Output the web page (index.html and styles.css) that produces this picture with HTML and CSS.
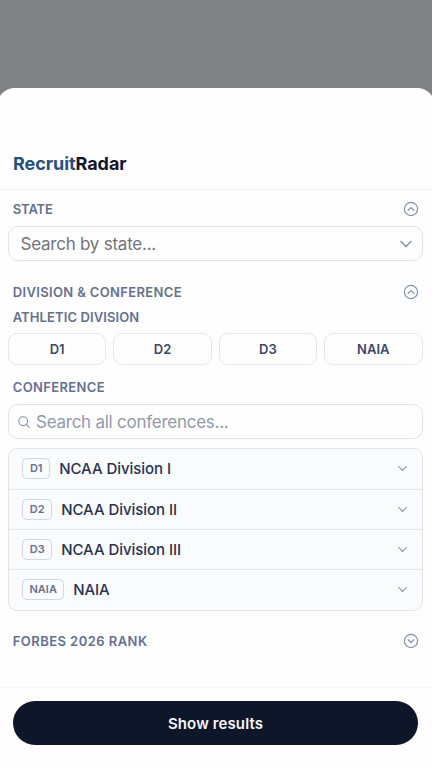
FILE: index.html
```
<!DOCTYPE html>
<html lang="en">
<head>
<meta charset="utf-8">
<title>RecruitRadar</title>
<link rel="stylesheet" href="styles.css">
</head>
<body>
<svg class="defs" aria-hidden="true">
  <symbol id="down" viewBox="0 0 12 12"><path d="M1 3.5 6 8.5 11 3.5"/></symbol>
  <symbol id="circle-up" viewBox="0 0 16 16"><circle cx="8" cy="8" r="6.6"/><path d="M5.1 9.3 8 6.6l2.9 2.7"/></symbol>
  <symbol id="circle-down" viewBox="0 0 16 16"><circle cx="8" cy="8" r="6.6"/><path d="M5.1 6.8 8 9.5l2.9-2.7"/></symbol>
  <symbol id="search" viewBox="0 0 12 12"><circle cx="5.2" cy="5.2" r="4.4"/><path d="m8.4 8.4 2.9 2.9"/></symbol>
</svg>
<div class="sheet">
  <header class="brand"><span class="brand-a">Recruit</span><span class="brand-b">Radar</span></header>
  <main class="filters">
    <div class="heading state-heading"><span>STATE</span><svg class="toggle"><use href="#circle-up"/></svg></div>
    <div class="field state-field"><span>Search by state...</span><svg class="field-arrow"><use href="#down"/></svg></div>
    <div class="heading division-heading"><span>DIVISION &amp; CONFERENCE</span><svg class="toggle"><use href="#circle-up"/></svg></div>
    <div class="heading athletic-heading"><span>ATHLETIC DIVISION</span></div>
    <div class="divisions">
      <button>D1</button><button>D2</button><button>D3</button><button>NAIA</button>
    </div>
    <div class="heading conference-heading"><span>CONFERENCE</span></div>
    <div class="field conference-field"><svg class="search-icon"><use href="#search"/></svg><span>Search all conferences...</span></div>
    <div class="list">
      <div class="row"><span class="tag tag-one">D1</span><span class="name">NCAA Division I</span><svg class="row-arrow"><use href="#down"/></svg></div>
      <div class="row"><span class="tag">D2</span><span class="name">NCAA Division II</span><svg class="row-arrow"><use href="#down"/></svg></div>
      <div class="row"><span class="tag">D3</span><span class="name">NCAA Division III</span><svg class="row-arrow"><use href="#down"/></svg></div>
      <div class="row"><span class="tag tag-naia">NAIA</span><span class="name">NAIA</span><svg class="row-arrow"><use href="#down"/></svg></div>
    </div>
    <div class="heading rank-heading"><span>FORBES 2026 RANK</span><svg class="toggle"><use href="#circle-down"/></svg></div>
  </main>
  <footer class="footer"><button class="show">Show results</button></footer>
</div>
</body>
</html>
```
FILE: styles.css
```
* { box-sizing: border-box; }
body {
  margin: 0;
  height: 768px;
  padding-top: 88px;
  overflow: hidden;
  background: #818284;
  font-family: Inter, "Liberation Sans", sans-serif;
}
button { font-family: inherit; padding: 0; }
svg { fill: none; stroke: #8490a8; stroke-linecap: round; stroke-linejoin: round; flex: none; }
.defs { display: none; }
.sheet {
  height: 680px;
  margin: 0 -3px;
  padding: 0 3px;
  display: flex;
  flex-direction: column;
  background: #fefefe;
  border-radius: 18px 18px 0 0;
}
.brand {
  height: 102px;
  padding: 62px 13px 0;
  border-bottom: 1px solid #f1f2f4;
  font-size: 18px;
  line-height: 27px;
  font-weight: 650;
  letter-spacing: -0.06px;
  white-space: nowrap;
}
.brand-a { color: #26507d; }
.brand-b { color: #14162a; }
.filters { flex: 1; padding: 0 9.5px 0 8px; }
.heading {
  display: flex;
  align-items: center;
  justify-content: space-between;
  height: 20px;
  padding: 0 4px 0 4.7px;
  color: #65718f;
  font-size: 13px;
  font-weight: 580;
  letter-spacing: 0.36px;
  white-space: nowrap;
}
.toggle { width: 16px; height: 16px; stroke-width: 1.2; }
.state-heading { margin-top: 9px; letter-spacing: -0.1px; }
.field {
  display: flex;
  align-items: center;
  height: 35px;
  border: 1px solid #e1e4e9;
  border-radius: 10px;
  font-size: 17px;
  white-space: nowrap;
}
.state-field { margin-top: 7px; padding: 0 10px 0 11.5px; justify-content: space-between; color: #737477; letter-spacing: -0.24px; }
.field-arrow { width: 12px; height: 12px; stroke-width: 1.5; }
.division-heading { margin-top: 21px; }
.athletic-heading { margin-top: 5px; letter-spacing: 0.1px; }
.divisions { display: grid; grid-template-columns: repeat(4, 1fr); gap: 7px; margin-top: 6px; }
.divisions button {
  height: 32px;
  border: 1px solid #e4e7eb;
  border-radius: 9px;
  background: #fefefe;
  color: #3e4766;
  font-size: 13px;
  font-weight: 600;
}
.conference-heading { margin-top: 12px; }
.conference-field { margin-top: 7px; padding-left: 8.5px; gap: 6.5px; color: #9299a9; letter-spacing: -0.25px; }
.search-icon { width: 12px; height: 12px; stroke-width: 1.1; }
.list {
  height: 163px;
  margin-top: 8.5px;
  display: grid;
  grid-template-rows: repeat(4, 1fr);
  border: 1px solid #e1e5ea;
  border-radius: 9px;
  background: #f9fbfd;
}
.row { display: flex; align-items: center; padding: 0 15px 0 13.2px; }
.row + .row { border-top: 1px solid #e2e5ea; }
.tag {
  width: 30px;
  height: 21px;
  border: 1px solid #d2d7df;
  border-radius: 4.5px;
  color: #6b7389;
  font-size: 11px;
  line-height: 19px;
  font-weight: 580;
  text-align: center;
}
.tag-one { width: 28px; }
.tag-naia { width: 42px; }
.name { flex: 1; margin-left: 9px; color: #2a3150; font-size: 15px; font-weight: 480; letter-spacing: -0.05px; white-space: nowrap; }
.row-arrow { width: 9px; height: 9px; stroke: #8b92a1; stroke-width: 1.5; }
.rank-heading { margin-top: 20.5px; letter-spacing: 0.45px; }
.footer { height: 81px; padding: 13px 13.7px 0 12.7px; border-top: 1px solid #f6f7f8; }
.show {
  display: block;
  width: 100%;
  height: 44px;
  border: 0;
  border-radius: 22px;
  background: #0e162a;
  color: #f5f6f9;
  font-size: 15px;
  font-weight: 600;
  letter-spacing: 0.12px;
}
```
